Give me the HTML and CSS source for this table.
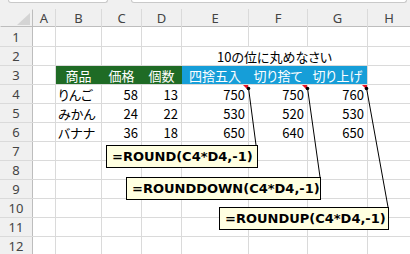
FILE: index.html
```html
<!DOCTYPE html>
<html lang="ja">
<head>
<meta charset="utf-8">
<title>ROUND関数</title>
<link rel="stylesheet" href="styles.css">
</head>
<body>
<div class="sheet">
  <div class="topbar">
    <div class="namebox"></div>
    <div class="fxbox"></div>
  </div>

  <div class="grid">
    <!-- column headers -->
    <div class="corner"></div>
    <div class="ch">A</div><div class="ch">B</div><div class="ch">C</div><div class="ch">D</div>
    <div class="ch">E</div><div class="ch">F</div><div class="ch">G</div><div class="ch">H</div>

    <!-- 1 -->
    <div class="rh">1</div>
    <div class="c"></div><div class="c"></div><div class="c"></div><div class="c"></div>
    <div class="c"></div><div class="c"></div><div class="c"></div><div class="c"></div>

    <!-- 2 -->
    <div class="rh">2</div>
    <div class="c"></div><div class="c"></div><div class="c"></div><div class="c"></div>
    <div class="c merged">10の位に丸めなさい</div>
    <div class="c"></div>

    <!-- 3 -->
    <div class="rh">3</div>
    <div class="c"></div>
    <div class="band green">
      <div class="hd">商品</div><div class="hd">価格</div><div class="hd">個数</div>
    </div>
    <div class="band blue">
      <div class="hd">四捨五入</div><div class="hd">切り捨て</div><div class="hd">切り上げ</div>
    </div>
    <div class="c"></div>

    <!-- 4 -->
    <div class="rh">4</div>
    <div class="c"></div>
    <div class="c">りんご</div>
    <div class="c num">58</div><div class="c num">13</div>
    <div class="c num note">750</div><div class="c num note">750</div><div class="c num note">760</div>
    <div class="c"></div>

    <!-- 5 -->
    <div class="rh">5</div>
    <div class="c"></div>
    <div class="c">みかん</div>
    <div class="c num">24</div><div class="c num">22</div>
    <div class="c num">530</div><div class="c num">520</div><div class="c num">530</div>
    <div class="c"></div>

    <!-- 6 -->
    <div class="rh">6</div>
    <div class="c"></div>
    <div class="c">バナナ</div>
    <div class="c num">36</div><div class="c num">18</div>
    <div class="c num">650</div><div class="c num">640</div><div class="c num">650</div>
    <div class="c"></div>

    <!-- 7 -->
    <div class="rh">7</div>
    <div class="c"></div><div class="c"></div><div class="c"></div><div class="c"></div>
    <div class="c"></div><div class="c"></div><div class="c"></div><div class="c"></div>
    <!-- 8 -->
    <div class="rh">8</div>
    <div class="c"></div><div class="c"></div><div class="c"></div><div class="c"></div>
    <div class="c"></div><div class="c"></div><div class="c"></div><div class="c"></div>
    <!-- 9 -->
    <div class="rh">9</div>
    <div class="c"></div><div class="c"></div><div class="c"></div><div class="c"></div>
    <div class="c"></div><div class="c"></div><div class="c"></div><div class="c"></div>
    <!-- 10 -->
    <div class="rh">10</div>
    <div class="c"></div><div class="c"></div><div class="c"></div><div class="c"></div>
    <div class="c"></div><div class="c"></div><div class="c"></div><div class="c"></div>
    <!-- 11 -->
    <div class="rh">11</div>
    <div class="c"></div><div class="c"></div><div class="c"></div><div class="c"></div>
    <div class="c"></div><div class="c"></div><div class="c"></div><div class="c"></div>
    <!-- 12 -->
    <div class="rh">12</div>
    <div class="c"></div><div class="c"></div><div class="c"></div><div class="c"></div>
    <div class="c"></div><div class="c"></div><div class="c"></div><div class="c"></div>
  </div>

  <!-- leader lines from the note markers to the formula callouts -->
  <svg class="leaders" width="410" height="254" viewBox="0 0 410 254">
    <g stroke="#000" stroke-width="1" fill="none">
      <line x1="248.5" y1="88" x2="256" y2="145"/>
      <line x1="307.5" y1="88" x2="320" y2="177"/>
      <line x1="366.5" y1="88" x2="388" y2="207"/>
    </g>
    <g fill="#000">
      <circle cx="248.5" cy="88.5" r="1.8"/>
      <circle cx="307.5" cy="88.5" r="1.8"/>
      <circle cx="366.5" cy="88.5" r="1.8"/>
    </g>
  </svg>

  <div class="callout c1">=ROUND(C4*D4,-1)</div>
  <div class="callout c2">=ROUNDDOWN(C4*D4,-1)</div>
  <div class="callout c3">=ROUNDUP(C4*D4,-1)</div>
</div>
</body>
</html>
```

FILE: styles.css
```css
body {
  margin: 0;
}

.sheet {
  position: relative;
  width: 410px;
  height: 254px;
  overflow: hidden;
  background: #f0f0f0;
  font-family: "Noto Sans CJK JP", sans-serif;
}

/* name box / formula bar edges peeking in at the top */
.topbar {
  display: flex;
  height: 9px;
}

.namebox,
.fxbox {
  height: 2px;
  background: #fff;
  border: 1px solid #c9c9c9;
  border-top: 0;
  border-radius: 0 0 3px 3px;
}

.namebox {
  margin-left: 8px;
  width: 98px;
}

.fxbox {
  margin-left: 23px;
  margin-right: 3px;
  flex: 1;
}

/* worksheet grid: the 1px gaps are the gridlines */
.grid {
  display: grid;
  grid-template-columns: 32px 22px 45px 39px 39px 66px 58px 59px 1fr;
  grid-template-rows: 17px 19px repeat(11, 18px);
  gap: 1px;
  background: #dadada;
}

.corner,
.ch,
.rh {
  background: #f0f0f0;
  color: #444;
  font-family: "Noto Sans", sans-serif;
  font-size: 13px;
  display: flex;
  align-items: center;
  justify-content: center;
}

.corner {
  position: relative;
  box-shadow: 1px 1px 0 #bdbdbd;
}

.corner::after {
  content: "";
  position: absolute;
  right: 2px;
  bottom: 1px;
  border-left: 13px solid transparent;
  border-bottom: 12px solid #d4d4d4;
}

.ch {
  box-shadow: 0 1px 0 #bdbdbd;
}

.rh {
  box-shadow: 1px 0 0 #bdbdbd;
}

.c {
  background: #fff;
  color: #000;
  font-size: 13px;
  font-feature-settings: "palt";
  display: flex;
  align-items: center;
  padding: 0 2px;
  white-space: nowrap;
}

.num {
  justify-content: flex-end;
  padding-right: 3px;
}

.merged {
  grid-column: span 3;
  justify-content: center;
  padding: 0;
}

/* comment indicator in the top-right corner of a cell */
.note {
  position: relative;
}

.note::after {
  content: "";
  position: absolute;
  top: 0;
  right: 0;
  border-top: 5px solid #e81123;
  border-left: 5px solid transparent;
}

/* filled header row */
.band {
  grid-column: span 3;
  display: grid;
  grid-template-columns: subgrid;
  color: #fff;
  font-size: 13px;
  font-feature-settings: "palt";
}

.green {
  background: #1f6b25;
  box-shadow: 1px 0 0 #1f6b25;
}

.blue {
  background: #169ed8;
}

.hd {
  display: flex;
  align-items: center;
  justify-content: center;
  white-space: nowrap;
}

.leaders {
  position: absolute;
  left: 0;
  top: 0;
  pointer-events: none;
}

/* formula callouts */
.callout {
  position: absolute;
  box-sizing: border-box;
  height: 23px;
  border: 1px solid #000;
  background: #ffffe1;
  color: #000;
  font-family: "DejaVu Sans", sans-serif;
  font-weight: bold;
  font-size: 13px;
  line-height: 21px;
  padding-left: 5px;
  white-space: nowrap;
}

.c1 {
  left: 106px;
  top: 145px;
  width: 152px;
}

.c2 {
  left: 126px;
  top: 177px;
  width: 195px;
}

.c3 {
  left: 219px;
  top: 207px;
  width: 170px;
}
```
